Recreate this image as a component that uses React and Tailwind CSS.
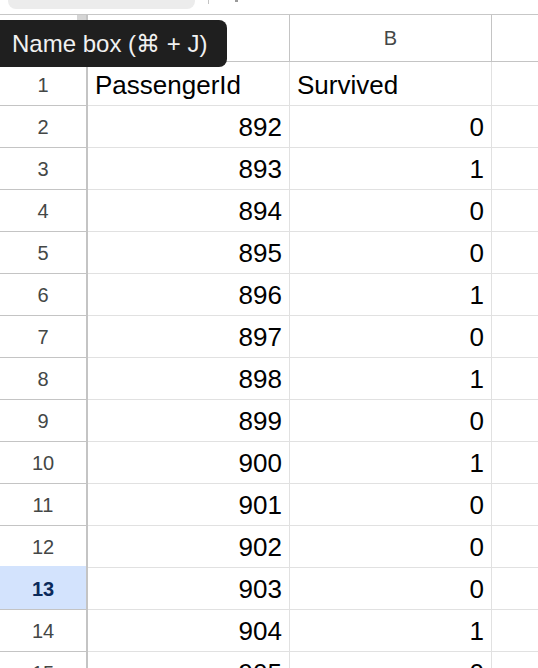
const rows = [
  [892, 0],
  [893, 1],
  [894, 0],
  [895, 0],
  [896, 1],
  [897, 0],
  [898, 1],
  [899, 0],
  [900, 1],
  [901, 0],
  [902, 0],
  [903, 0],
  [904, 1],
  [905, 0],
];

const App = () => {
  const selectedRow = 13;

  return (
    <div className="relative w-[538px] h-[668px] overflow-hidden bg-white font-['Liberation_Sans',Arial,'DejaVu_Sans',sans-serif]">
      {/* Top strip with name box */}
      <div className="flex h-[15px] border-b border-[#c7c7c7]">
        <div className="ml-[8px] w-[187px] h-[9px] bg-[#ececec] rounded-b-[8px]" />
        <div className="ml-[13px] w-px h-[4px] bg-[#c4c4c4]" />
        <div className="ml-[26px] w-[3px] h-[2px] bg-[#9a9a9a]" />
      </div>

      {/* Column headers */}
      <div className="grid grid-cols-[88px_202px_202px_1fr] h-[47px] border-b border-[#c4c4c4]">
        <div className="flex justify-end border-r-2 border-[#c4c4c4]">
          <div className="w-[9px] bg-[#d5d5d5]" />
        </div>
        <div className="flex items-center justify-center border-r border-[#c4c4c4] text-[20px] text-[#444746]">
          A
        </div>
        <div className="flex items-center justify-center border-r border-[#c4c4c4] text-[20px] text-[#444746]">
          B
        </div>
        <div />
      </div>

      {/* Header data row */}
      <div className="grid grid-cols-[88px_202px_202px_1fr] h-[42px]">
        <div className="flex items-center justify-center pt-[2px] border-r-2 border-b border-[#c4c4c4] text-[20px] text-[#444746]">
          1
        </div>
        <div className="flex items-center pl-[7px] pt-[4px] border-r border-b border-[#e1e1e1] text-[26px] text-black">
          PassengerId
        </div>
        <div className="flex items-center pl-[7px] pt-[4px] border-r border-b border-[#e1e1e1] text-[26px] text-black">
          Survived
        </div>
        <div className="border-b border-[#e1e1e1]" />
      </div>

      {/* Data rows */}
      {rows.map(([id, survived], i) => {
        const n = i + 2;
        const selected = n === selectedRow;
        return (
          <div key={id} className="grid grid-cols-[88px_202px_202px_1fr] h-[42px]">
            <div
              className={
                selected
                  ? "flex items-center justify-center pt-[2px] border-r-2 border-b border-[#c4c4c4] bg-[#d3e3fd] text-[20px] font-bold text-[#0b2a5b]"
                  : "flex items-center justify-center pt-[2px] border-r-2 border-b border-[#c4c4c4] text-[20px] text-[#444746]"
              }
            >
              {n}
            </div>
            <div className="flex items-center justify-end pr-[7px] pt-[4px] border-r border-b border-[#e1e1e1] text-[26px] text-black">
              {id}
            </div>
            <div className="flex items-center justify-end pr-[7px] pt-[4px] border-r border-b border-[#e1e1e1] text-[26px] text-black">
              {survived}
            </div>
            <div className="border-b border-[#e1e1e1]" />
          </div>
        );
      })}

      {/* Tooltip */}
      <div className="absolute left-0 top-[20px] w-[227px] h-[47px] flex items-center pl-[12px] bg-[#1f1f1f] rounded-r-[8px] text-[24px] text-[#f1f1f1] whitespace-nowrap">
        Name box (⌘ + J)
      </div>
    </div>
  );
};

export default App;
